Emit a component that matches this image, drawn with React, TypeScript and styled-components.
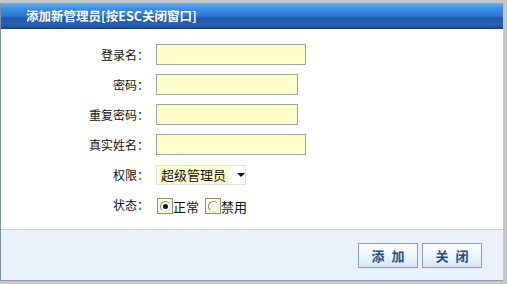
import React from "react"
import styled, { createGlobalStyle } from "styled-components"

const GlobalStyle = createGlobalStyle`
    html, body {
        margin: 0;
        padding: 0;
        background: #c4c6c8;
        font-family: "Noto Sans CJK SC", "DejaVu Sans", sans-serif;
    }
`

interface Field {
    label: string;
    width: number;
}

const fields: Field[] = [
    { label: "登录名：", width: 150 },
    { label: "密码：", width: 142 },
    { label: "重复密码：", width: 142 },
    { label: "真实姓名：", width: 150 },
]

export default function App() {
    return (
        <>
            <GlobalStyle />
            <Page>
                <Dialog>
                    <TitleBar>添加新管理员[按ESC关闭窗口]</TitleBar>
                    <Body>
                        <Form>
                            {fields.map(f => (
                                <React.Fragment key={f.label}>
                                    <Label>{f.label}</Label>
                                    <Cell><TextInput $width={f.width} /></Cell>
                                </React.Fragment>
                            ))}
                            <Label>权限：</Label>
                            <Cell>
                                <Select>
                                    <SelectText>超级管理员</SelectText>
                                    <Arrow />
                                </Select>
                            </Cell>
                            <Label>状态：</Label>
                            <Cell>
                                <RadioOption>
                                    <RadioBox><Radio $checked /></RadioBox>正常
                                </RadioOption>
                                <RadioOption>
                                    <RadioBox><Radio /></RadioBox>禁用
                                </RadioOption>
                            </Cell>
                        </Form>
                    </Body>
                    <Footer>
                        <Button>添 加</Button>
                        <Button>关 闭</Button>
                    </Footer>
                </Dialog>
            </Page>
        </>
    )
}

const Page = styled.div`
    width: 507px;
    height: 284px;
    padding-top: 3px;
    box-sizing: border-box;
`

const Dialog = styled.div`
    width: 503px;
    height: 278px;
    display: flex;
    flex-direction: column;
    background: #ffffff;
    border-left: 1px solid #7d8ea6;
    box-sizing: border-box;
`

const TitleBar = styled.div`
    height: 26px;
    line-height: 25px;
    padding-left: 25px;
    box-sizing: border-box;
    color: #ffffff;
    font-size: 12.5px;
    font-weight: bold;
    background: linear-gradient(#64aeea 0%, #3a8ce0 25%, #2c79d6 50%, #2358ae 62%, #2a62b6 85%, #1d4d94 100%);
    border-bottom: 1px solid #1c3f78;
`

const Body = styled.div`
    flex: 1;
    padding-top: 10px;
`

const Form = styled.div`
    display: grid;
    grid-template-columns: 148px 1fr;
    grid-auto-rows: 30px;
    column-gap: 7px;
`

const Label = styled.div`
    display: flex;
    align-items: center;
    justify-content: flex-end;
    font-size: 12px;
    color: #111111;
`

const Cell = styled.div`
    display: flex;
    align-items: center;
    gap: 5px;
`

const TextInput = styled.div<{ $width: number }>`
    width: ${p => p.$width}px;
    height: 21px;
    box-sizing: border-box;
    background: #ffffcc;
    border: 1px solid #a0a4a0;
`

const Select = styled.div`
    width: 90px;
    height: 20px;
    box-sizing: border-box;
    display: flex;
    align-items: center;
    border: 1px solid #e2e2e2;
    background: #ffffff;
    margin-top: 1px;
`

const SelectText = styled.span`
    background: #ffffcc;
    font-size: 13px;
    padding: 0 4px;
    line-height: 18px;
    color: #111111;
`

const Arrow = styled.span`
    margin-left: 7px;
    width: 0;
    height: 0;
    border-left: 4px solid transparent;
    border-right: 4px solid transparent;
    border-top: 4px solid #111111;
`

const RadioOption = styled.label`
    display: flex;
    align-items: center;
    font-size: 13px;
    color: #111111;
    margin-top: 4px;
`

const RadioBox = styled.span`
    width: 16px;
    height: 16px;
    box-sizing: border-box;
    border: 1px solid #8c8c8c;
    background: #ffffcc;
    display: flex;
    align-items: center;
    justify-content: center;
    margin-left: 1px;
`

const Radio = styled.span<{ $checked?: boolean }>`
    width: 11px;
    height: 11px;
    box-sizing: border-box;
    border-radius: 50%;
    border: 1px solid #8a8a8a;
    border-right-color: #e0e0e0;
    border-bottom-color: #e0e0e0;
    background: #ffffff;
    position: relative;
    &::after {
        content: "";
        display: ${p => (p.$checked ? "block" : "none")};
        position: absolute;
        left: 2px;
        top: 2px;
        width: 5px;
        height: 5px;
        border-radius: 50%;
        background: #111111;
    }
`

const Footer = styled.div`
    height: 52px;
    box-sizing: border-box;
    background: #eaf1fb;
    border-top: 1px solid #cdd6e2;
    border-bottom: 1px solid #8e9cb2;
    display: flex;
    justify-content: flex-end;
    align-items: flex-start;
    gap: 4px;
    padding: 13px 21px 0 0;
`

const Button = styled.div`
    width: 60px;
    height: 25px;
    box-sizing: border-box;
    border: 1px solid #8aa0b8;
    background: linear-gradient(#ffffff 0%, #eef5fc 50%, #d6e8f8 100%);
    color: #1b4f8c;
    font-size: 13px;
    font-weight: bold;
    display: flex;
    align-items: center;
    justify-content: center;
    letter-spacing: 2px;
    text-indent: 2px;
`
